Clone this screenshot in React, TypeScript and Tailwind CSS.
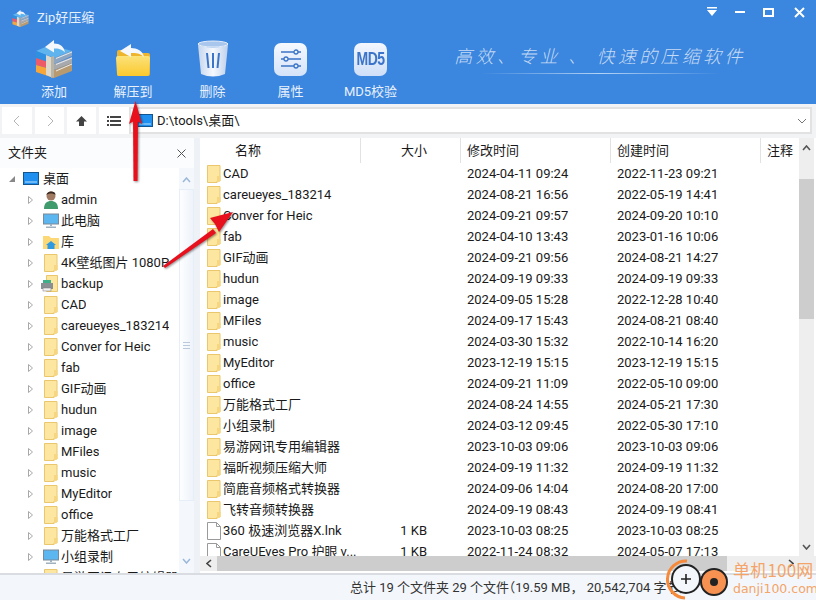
import React from "react";

const font = { fontFamily: 'Roboto,"Noto Sans CJK SC",sans-serif' };

function Folder() {
  return (
    <svg width="14" height="18" viewBox="0 0 14 18" className="shrink-0">
      <path d="M.5.5h12.5v15.5h-3v1.5H.5z" fill="#fde7a0" stroke="#eac66c" />
      <path d="M10 11h3.5v5l-3.5 1.5z" fill="#f6d680" />
    </svg>
  );
}

function Doc() {
  return (
    <svg width="14" height="18" viewBox="0 0 14 18" className="shrink-0">
      <path d="M.5.5h9l4 4v13H.5z" fill="#fff" stroke="#9a9a9a" />
      <path d="M9.5.5v4h4" fill="none" stroke="#9a9a9a" />
    </svg>
  );
}

function Monitor() {
  return (
    <svg width="16" height="16" viewBox="0 0 16 16" className="shrink-0">
      <rect x=".5" y="1" width="15" height="10" fill="#5cb6ef" stroke="#7b8a99" />
      <path d="M7 11h2v2H7z" fill="#9fb0bf" />
      <path d="M3 13.5h10v1.5H3z" fill="#9fb0bf" />
    </svg>
  );
}

function Person() {
  return (
    <svg width="16" height="20" viewBox="0 0 16 20" className="shrink-0">
      <circle cx="8" cy="6" r="4.5" fill="#a07a62" />
      <path d="M3.5 5c0-4 9-5 9 0-2-2-7-2-9 0z" fill="#3b2a22" />
      <path d="M1 19c0-6 3-8 7-8s7 2 7 8z" fill="#3f9a6c" />
    </svg>
  );
}

function Lib() {
  return (
    <svg width="16" height="16" viewBox="0 0 16 16" className="shrink-0">
      <path d="M0 2h6l2 2h8v11H0z" fill="#fcd877" />
      <path d="M8 7l5 4h-1.5v4h-7v-4H3z" fill="#2f9ae0" />
    </svg>
  );
}

function Backup() {
  return (
    <svg width="20" height="18" viewBox="0 0 20 18" className="shrink-0">
      <path d="M5.5.5h11v16h-11z" fill="#fde7a0" stroke="#eac66c" />
      <rect x="0" y="8" width="12" height="6" fill="#8a8f94" />
      <rect x="2" y="5" width="8" height="3" fill="#3db08a" />
      <rect x="2" y="13" width="8" height="3" fill="#f2f2f2" stroke="#777" strokeWidth=".5" />
    </svg>
  );
}

function Desktop() {
  return (
    <svg width="16" height="14" viewBox="0 0 16 14" className="shrink-0">
      <rect x=".5" y=".5" width="15" height="12" fill="#1f8ff0" stroke="#12558f" />
      <path d="M2 10h12" stroke="#bfe2fb" />
    </svg>
  );
}

const tree: [string, React.ReactNode][] = [
  ["admin", <Person />],
  ["此电脑", <Monitor />],
  ["库", <Lib />],
  ["4K壁纸图片 1080P", <Folder />],
  ["backup", <Backup />],
  ["CAD", <Folder />],
  ["careueyes_183214", <Folder />],
  ["Conver for Heic", <Folder />],
  ["fab", <Folder />],
  ["GIF动画", <Folder />],
  ["hudun", <Folder />],
  ["image", <Folder />],
  ["MFiles", <Folder />],
  ["music", <Folder />],
  ["MyEditor", <Folder />],
  ["office", <Folder />],
  ["万能格式工厂", <Folder />],
  ["小组录制", <Monitor />],
  ["易游网讯专用编辑器", <Folder />],
];

const rows: [string, string, string, string][] = [
  ["CAD", "", "2024-04-11 09:24", "2022-11-23 09:21"],
  ["careueyes_183214", "", "2024-08-21 16:56", "2022-05-19 14:41"],
  ["Conver for Heic", "", "2024-09-21 09:57", "2024-09-20 10:10"],
  ["fab", "", "2024-04-10 13:43", "2023-01-16 10:06"],
  ["GIF动画", "", "2024-09-21 09:56", "2024-08-21 14:27"],
  ["hudun", "", "2024-09-19 09:33", "2024-09-19 09:33"],
  ["image", "", "2024-09-05 15:28", "2022-12-28 10:40"],
  ["MFiles", "", "2024-09-17 15:43", "2024-08-21 08:40"],
  ["music", "", "2024-03-30 15:32", "2022-10-14 16:20"],
  ["MyEditor", "", "2023-12-19 15:15", "2023-12-19 15:15"],
  ["office", "", "2024-09-21 11:09", "2022-05-10 09:00"],
  ["万能格式工厂", "", "2024-08-24 14:55", "2024-05-21 17:30"],
  ["小组录制", "", "2024-03-12 09:45", "2022-05-30 17:10"],
  ["易游网讯专用编辑器", "", "2023-10-03 09:06", "2023-10-03 09:06"],
  ["福昕视频压缩大师", "", "2024-09-19 11:32", "2024-09-19 11:32"],
  ["简鹿音频格式转换器", "", "2024-09-06 14:04", "2024-08-20 17:00"],
  ["飞转音频转换器", "", "2024-09-19 08:43", "2024-09-19 08:41"],
  ["360 极速浏览器X.lnk", "1 KB", "2023-10-03 08:25", "2023-10-03 08:25"],
  ["CareUEyes Pro 护眼 v...", "1 KB", "2022-11-24 08:32", "2024-05-07 17:13"],
];

function ToolBtn({ label, children, w }: { label: string; children: React.ReactNode; w: string }) {
  return (
    <div className={`flex flex-col items-center ${w}`}>
      <div className="h-[44px] pt-[2px] flex items-center justify-center">{children}</div>
      <span className="mt-[3px] text-[13px] leading-[18px] text-[#e8f1fc]">{label}</span>
    </div>
  );
}

function RarIcon({ size = 38 }: { size?: number }) {
  return (
    <svg width={size} height={size} viewBox="0 0 38 38">
      <path d="M1 11L15 5l22 6-18 7z" fill="#5fb4ee" />
      <path d="M1 11l18 7v6L1 18z" fill="#2f8fe0" />
      <path d="M19 18l18-7v5l-18 8z" fill="#8fa6c0" />
      <path d="M1 18l18 6v6L1 25z" fill="#ee5a68" />
      <path d="M19 24l18-7v6l-18 7z" fill="#a7a9ad" />
      <path d="M1 25l18 5v8L1 32z" fill="#f7a73a" />
      <path d="M19 30l18-7v8l-18 7z" fill="#b89a70" />
      <path d="M21 18.500l16-6.500M21 24.500l16-6.500M21 31l16-7" stroke="#e6eaf0" strokeWidth="1" />
      <path d="M11 15l5 2v20l-5-2z" fill="#dcd8cc" />
      <path d="M16 17l3-1v21l-3 1z" fill="#b8b4a8" />
      <path d="M10 7l9-7v3.500c6 0 10 3 11 9-3-3.500-7-4-11-4v4z" fill="#f4f7fb" />
    </svg>
  );
}

export default function App() {
  return (
    <div className="relative w-[816px] h-[600px] overflow-hidden bg-[#eef2f7] flex flex-col text-[13px] text-[#1a1a1a]" style={font}>
      {/* Top blue */}
      <div className="h-[104px] bg-[#3b86de] flex flex-col shrink-0">
        <div className="h-[36px] flex items-center pl-[12px] pr-[11px] shrink-0">
          <RarIcon size={17} />
          <span className="ml-[8px] text-[13px] text-[#e6f0fb]">Zip好压缩</span>
          <div className="ml-auto flex items-center">
            <svg width="12" height="12" viewBox="0 0 12 12" className="mr-[17px] mb-[12px]"><path d="M1 1h10v1.500H1zM1 4h10L6 10z" fill="#fff" /></svg>
            <div className="w-[10px] h-[2px] bg-white mr-[18px] mb-[12px]" />
            <div className="w-[11px] h-[9px] border-2 border-white mr-[20px] mb-[12px]" />
            <svg width="11" height="11" viewBox="0 0 11 11" className="mb-[12px]"><path d="M1 1l9 9M10 1l-9 9" stroke="#fff" strokeWidth="2" /></svg>
          </div>
        </div>
        <div className="flex items-start pl-[13px]">
          <ToolBtn label="添加" w="w-[82px]"><RarIcon /></ToolBtn>
          <ToolBtn label="解压到" w="w-[76px]">
            <svg width="36" height="36" viewBox="0 0 36 36">
              <defs>
                <linearGradient id="fb" x1="0" y1="0" x2="0" y2="1">
                  <stop offset="0" stopColor="#fbe27a" />
                  <stop offset="1" stopColor="#fcc92e" />
                </linearGradient>
              </defs>
              <path d="M2 11q0-2 2-2h8l2 3h19q2 0 2 2v19q0 2-2 2H4q-2 0-2-2z" fill="#eeb52c" />
              <path d="M1 17q0-2 2-2h30q2 0 2 2l-1 16q0 2-2 2H4q-2 0-2-2z" fill="url(#fb)" />
              <path d="M5 10l11-7v4c6 0 12 3 13 9-4-4-8-4-13-4v4z" fill="#f4f7fb" />
            </svg>
          </ToolBtn>
          <ToolBtn label="删除" w="w-[83px]">
            <svg width="32" height="38" viewBox="0 0 32 38">
              <defs>
                <linearGradient id="tb" x1="0" y1="0" x2="1" y2="0">
                  <stop offset="0" stopColor="#c4d5ee" />
                  <stop offset=".5" stopColor="#f6f9fd" />
                  <stop offset="1" stopColor="#bdd0ec" />
                </linearGradient>
              </defs>
              <path d="M1 5q15 5 30 0l-3 29q-12 5-24 0z" fill="url(#tb)" />
              <ellipse cx="16" cy="4" rx="15" ry="3" fill="#a9c6ec" stroke="#e6eef9" />
              <path d="M10 13l1.500 15M16 13v15M22 13l-1.500 15" stroke="#3b74c8" strokeWidth="2" />
            </svg>
          </ToolBtn>
          <ToolBtn label="属性" w="w-[73px]">
            <div className="w-[33px] h-[33px] rounded-[7px] bg-gradient-to-b from-[#f6f9fe] to-[#d5e3f9] flex items-center justify-center">
              <svg width="22" height="20" viewBox="0 0 22 20" fill="none" stroke="#3b74c8" strokeWidth="1.300">
                <path d="M1 3h13M18 3h3M1 10h3M8 10h13M1 17h13M18 17h3" />
                <circle cx="16" cy="3" r="2" /><circle cx="6" cy="10" r="2" /><circle cx="16" cy="17" r="2" />
              </svg>
            </div>
          </ToolBtn>
          <ToolBtn label="MD5校验" w="w-[87px]">
            <div className="w-[33px] h-[33px] rounded-[7px] bg-gradient-to-b from-[#f3f7fe] to-[#cfdff8] flex items-center justify-center">
              <span className="text-[14px] font-bold text-[#3b74c8] tracking-[-0.5px] scale-y-125" style={{ fontFamily: '"Liberation Sans",sans-serif' }}>MD5</span>
            </div>
          </ToolBtn>
          <div className="ml-[40px] mt-[7px] flex flex-col items-center w-[292px]">
            <span className="text-[18px] italic font-light tracking-[3.3px] leading-[24px] text-[#c6dbf5] whitespace-nowrap" style={{ fontFamily: '"Noto Sans CJK SC",serif' }}>高效、专业 、 快速的压缩软件</span>
            <div className="h-px w-[240px] mt-[6px] bg-gradient-to-r from-transparent via-[#b4d2f4] to-transparent" />
          </div>
        </div>
      </div>

      {/* Nav */}
      <div className="h-[34px] pt-[3px] flex shrink-0 bg-[#f2f3f5]">
        <div className="flex h-[27px] ml-[2px] gap-[3px]">
          <div className="w-[30px] bg-white flex items-center justify-center">
            <svg width="8" height="12" viewBox="0 0 8 12" fill="none" stroke="#b4b4b4"><path d="M6 1L1 6l5 5" /></svg>
          </div>
          <div className="w-[29px] bg-white flex items-center justify-center">
            <svg width="8" height="12" viewBox="0 0 8 12" fill="none" stroke="#b4b4b4"><path d="M2 1l5 5-5 5" /></svg>
          </div>
          <div className="w-[29px] bg-white flex items-center justify-center">
            <svg width="11" height="12" viewBox="0 0 11 12"><path d="M5.500 1L11 6.500H8V11H3V6.500H0z" fill="#444" /></svg>
          </div>
          <div className="w-[30px] bg-white flex items-center justify-center">
            <svg width="14" height="12" viewBox="0 0 14 12" fill="#444"><path d="M0 1h2v2H0zM3 1h11v2H3zM0 5h2v2H0zM3 5h11v2H3zM0 9h2v2H0zM3 9h11v2H3z" /></svg>
          </div>
        </div>
        <div className="flex-1 h-[27px] mr-[4px] bg-white border-2 border-[#e2e2e2] flex items-center pl-[6px]">
          <Desktop />
          <span className="ml-[4px] text-[13px]">D:\tools\桌面\</span>
          <svg width="10" height="6" viewBox="0 0 10 6" className="ml-auto mr-[3px]" fill="none" stroke="#777"><path d="M1 1l4 4 4-4" /></svg>
        </div>
      </div>

      {/* Main */}
      <div className="flex flex-1 min-h-0">
        {/* Left */}
        <div className="w-[194px] shrink-0 bg-white flex flex-col overflow-hidden mr-[6px]">
          <div className="h-[30px] flex items-center pl-[8px] pr-[8px] shrink-0 bg-[#fbfcfe]">
            <span>文件夹</span>
            <svg width="9" height="9" viewBox="0 0 9 9" className="ml-auto" stroke="#555" fill="none"><path d="M.5.5l8 8M8.500.5l-8 8" /></svg>
          </div>
          <div className="flex flex-1 min-h-0">
            <div className="flex-1 overflow-hidden min-w-0">
              <div className="h-[21px] flex items-center pl-[8px]">
                <svg width="8" height="8" viewBox="0 0 8 8" className="mr-[7px]"><path d="M7 1v6H1z" fill="#888" /></svg>
                <Desktop />
                <span className="ml-[4px]">桌面</span>
              </div>
              {tree.map(([n, ic]) => (
                <div key={n} className="h-[21px] flex items-center pl-[28px] whitespace-nowrap">
                  <svg width="5" height="8" viewBox="0 0 5 8" className="shrink-0"><path d="M.5.5L4.500 4 .5 7.500z" fill="#fff" stroke="#a8a8a8" /></svg>
                  <div className="w-[24px] ml-[6px] flex justify-center shrink-0 -mr-[2px]">{ic}</div>
                  <span className="overflow-hidden">{n}</span>
                </div>
              ))}
            </div>
            <div className="w-[15px] shrink-0 bg-[#f4f8fd] flex flex-col items-center">
              <svg width="9" height="6" viewBox="0 0 9 6" className="mt-[9px]" fill="none" stroke="#9cb8d8" strokeWidth="1.500"><path d="M1 5l3.500-4L8 5" /></svg>
              <div className="mt-[6px] h-[312px] w-full bg-gradient-to-r from-[#fdfeff] to-[#eef3fa] border border-[#e6eef8] flex items-center justify-center">
                <div className="w-[7px] h-[7px] border-y border-[#bcc9da] flex items-center"><div className="w-full h-px bg-[#bcc9da]" /></div>
              </div>
              <svg width="9" height="6" viewBox="0 0 9 6" className="mt-auto mb-[9px]" fill="none" stroke="#9cb8d8" strokeWidth="1.500"><path d="M1 1l3.500 4L8 1" /></svg>
            </div>
          </div>
        </div>

        {/* Right */}
        <div className="flex-1 min-w-0 bg-white flex flex-col overflow-hidden">
          <div className="flex flex-1 min-h-0">
            <div className="flex-1 min-w-0 overflow-hidden">
              <div className="flex h-[25px] items-center">
                <div className="w-[161px] pl-[35px] pt-[1px] h-full flex items-center border-r border-[#e2e2e2]">名称</div>
                <div className="w-[100px] pr-[33px] pt-[1px] h-full flex items-center justify-end border-r border-[#e2e2e2]">大小</div>
                <div className="w-[150px] pl-[6px] pt-[1px] h-full flex items-center border-r border-[#e2e2e2]">修改时间</div>
                <div className="w-[150px] pl-[6px] pt-[1px] h-full flex items-center border-r border-[#e2e2e2]">创建时间</div>
                <div className="pl-[6px] pt-[1px]">注释</div>
              </div>
              {rows.map(([n, s, m, c], i) => (
                <div key={n} className="h-[21px] flex items-center whitespace-nowrap">
                  <div className="w-[160px] pl-[7px] flex items-center">
                    {i < 17 ? <Folder /> : <Doc />}
                    <span className="ml-[2px]">{n}</span>
                  </div>
                  <div className="w-[100px] pr-[33px] text-right">{s}</div>
                  <div className="w-[150px] pl-[7px]">{m}</div>
                  <div className="pl-[7px]">{c}</div>
                </div>
              ))}
            </div>
            <div className="w-[17px] shrink-0 flex flex-col">
              <div className="w-[15px] flex-1 bg-[#eeeeee] flex flex-col items-center">
                <svg width="9" height="6" viewBox="0 0 9 6" className="mt-[7px]" fill="none" stroke="#555" strokeWidth="1.600"><path d="M1 5l3.500-4L8 5" /></svg>
                <div className="mt-[28px] h-[140px] w-full bg-[#cdcdcd]" />
                <svg width="9" height="6" viewBox="0 0 9 6" className="mt-auto mb-[6px]" fill="none" stroke="#555" strokeWidth="1.600"><path d="M1 1l3.500 4L8 1" /></svg>
              </div>
            </div>
          </div>
          <div className="h-[17px] shrink-0 flex pb-[2px] bg-white">
            <div className="flex flex-1 bg-[#eeeeee]">
              <div className="w-[17px] flex items-center justify-center">
                <svg width="6" height="9" viewBox="0 0 6 9" fill="none" stroke="#444" strokeWidth="1.600"><path d="M5 1L1 4.500 5 8" /></svg>
              </div>
              <div className="w-[510px] bg-[#cdcdcd]" />
              <div className="flex-1 flex items-center justify-end pr-[22px]">
                <svg width="6" height="9" viewBox="0 0 6 9" fill="none" stroke="#444" strokeWidth="1.600"><path d="M1 1l4 3.500L1 8" /></svg>
              </div>
            </div>
          </div>
        </div>
      </div>

      {/* Status */}
      <div className="h-[27px] shrink-0 bg-[#f3f7fc] border-t-2 border-[#d9dde2] flex items-center pl-[350px] whitespace-nowrap text-[#333]">
        <span>总计 19 个文件夹 29 个文件</span>
        <span className="-ml-[7px]">（19.59 MB， 20,542,704 字节）</span>
      </div>

      {/* Arrows */}
      <svg className="absolute left-0 top-0 pointer-events-none drop-shadow-[1px_1px_1px_rgba(0,0,0,0.45)]" width="816" height="600" viewBox="0 0 816 600">
        <path d="M133.500 181L133 118h5l-.5 63z" fill="#e8101c" />
        <path d="M135.500 101L129 124l6.500-4 6.500 4z" fill="#e8101c" />
        <path d="M163 266l50-37 3 4-51 35z" fill="#e8101c" />
        <path d="M233 212l-23 6 5 6 4 8z" fill="#e8101c" />
      </svg>

      {/* Watermark */}
      <div className="absolute left-[666px] top-[558px] w-[150px] h-[42px] pointer-events-none">
        <svg width="62" height="42" viewBox="0 0 62 42" className="absolute left-0 top-0">
          <path d="M21 3A18 18 0 0 0 19 40" fill="none" stroke="#f58a3c" strokeWidth="3" />
          <circle cx="20" cy="21" r="14" fill="#f3f7fc" stroke="#222" strokeWidth="2" />
          <path d="M15 21h10M20 16v10" stroke="#222" strokeWidth="1.600" />
          <circle cx="48" cy="24" r="13" fill="#f69152" stroke="#222" strokeWidth="2" />
          <circle cx="48" cy="24" r="4" fill="#222" />
        </svg>
        <span className="absolute left-[67px] top-[1px] text-[17px] leading-[22px] text-[#f4a468] tracking-[0.2px] whitespace-nowrap" style={{ fontFamily: '"Noto Sans CJK SC",sans-serif' }}>单机100网</span>
        <span className="absolute left-[67px] top-[22px] text-[12.5px] leading-[18px] text-[#f4a468] whitespace-nowrap" style={{ fontFamily: '"DejaVu Sans",sans-serif' }}>danji100.com</span>
      </div>
    </div>
  );
}
